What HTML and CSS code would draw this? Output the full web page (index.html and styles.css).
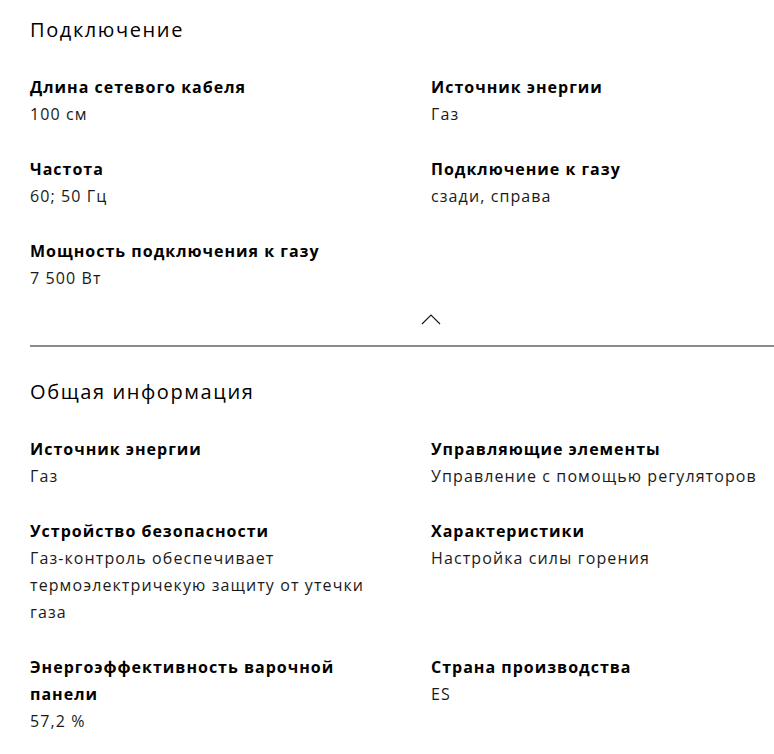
FILE: index.html
```html
<!DOCTYPE html>
<html lang="ru">
<head>
<meta charset="utf-8">
<link rel="stylesheet" href="styles.css">
</head>
<body>
<div class="page">
  <section class="section">
    <h2 class="section-title">Подключение</h2>
    <div class="grid">
      <div class="item"><div class="label">Длина сетевого кабеля</div><div class="value">100 см</div></div>
      <div class="item"><div class="label">Источник энергии</div><div class="value">Газ</div></div>
      <div class="item"><div class="label">Частота</div><div class="value">60; 50 Гц</div></div>
      <div class="item"><div class="label">Подключение к газу</div><div class="value">сзади, справа</div></div>
      <div class="item"><div class="label">Мощность подключения к газу</div><div class="value">7 500 Вт</div></div>
    </div>
    <div class="toggle">
      <svg width="20" height="12" viewBox="0 0 20 12" aria-hidden="true"><path d="M1 11 L10 2 L19 11" fill="none" stroke="#1a1a1a" stroke-width="1.2"/></svg>
    </div>
  </section>
  <hr class="divider">
  <section class="section">
    <h2 class="section-title">Общая информация</h2>
    <div class="grid">
      <div class="item"><div class="label">Источник энергии</div><div class="value">Газ</div></div>
      <div class="item"><div class="label">Управляющие элементы</div><div class="value">Управление с помощью регуляторов</div></div>
      <div class="item"><div class="label">Устройство безопасности</div><div class="value">Газ-контроль обеспечивает термоэлектричекую защиту от утечки газа</div></div>
      <div class="item"><div class="label">Характеристики</div><div class="value">Настройка силы горения</div></div>
      <div class="item"><div class="label">Энергоэффективность варочной панели</div><div class="value">57,2 %</div></div>
      <div class="item"><div class="label">Страна производства</div><div class="value">ES</div></div>
    </div>
  </section>
</div>
</body>
</html>
```
FILE: styles.css
```css
html, body {
  margin: 0;
  padding: 0;
  background: #ffffff;
}
body {
  font-family: "Open Sans", "Liberation Sans", sans-serif;
  color: #000000;
}
.page {
  padding: 15px 0 0 30px;
}
.section-title {
  margin: 0;
  font-size: 20px;
  font-weight: 400;
  line-height: 30px;
  letter-spacing: 1.6px;
}
.grid {
  display: grid;
  grid-template-columns: 344px 1fr;
  column-gap: 57px;
  row-gap: 28px;
  margin-top: 29px;
  max-width: 744px;
}
.label {
  font-size: 16px;
  font-weight: 700;
  line-height: 27px;
  letter-spacing: 1px;
}
.value {
  font-size: 16px;
  font-weight: 400;
  line-height: 27px;
  letter-spacing: 1.1px;
  color: #1a1a1a;
}
.toggle {
  display: flex;
  padding-left: 391px;
  margin-top: 21px;
  height: 14px;
}
.divider {
  margin: 18px 0 0 0;
  border: 0;
  border-top: 2px solid #8c8c8c;
}
.section + .divider + .section {
  padding-top: 30px;
}
```
